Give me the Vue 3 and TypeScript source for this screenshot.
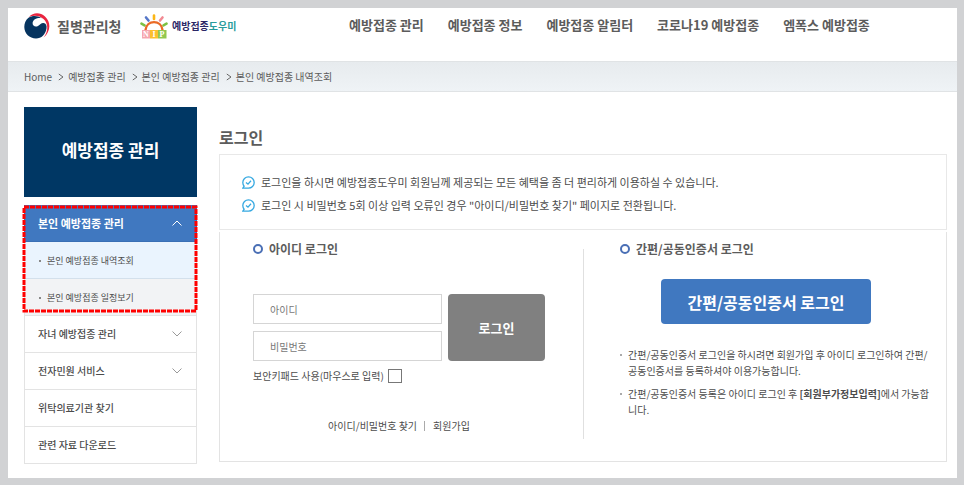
<script setup lang="ts">
import { ref } from 'vue'

interface MenuItem {
  label: string
  expandable: boolean
}

const navItems: string[] = ['예방접종 관리', '예방접종 정보', '예방접종 알림터', '코로나19 예방접종', '엠폭스 예방접종']
const crumbs: string[] = ['Home', '예방접종 관리', '본인 예방접종 관리', '본인 예방접종 내역조회']
const subItems: string[] = ['본인 예방접종 내역조회', '본인 예방접종 일정보기']
const menuItems: MenuItem[] = [
  { label: '자녀 예방접종 관리', expandable: true },
  { label: '전자민원 서비스', expandable: true },
  { label: '위탁의료기관 찾기', expandable: false },
  { label: '관련 자료 다운로드', expandable: false },
]
const notices: string[] = [
  '로그인을 하시면 예방접종도우미 회원님께 제공되는 모든 혜택을 좀 더 편리하게 이용하실 수 있습니다.',
  '로그인 시 비밀번호 5회 이상 입력 오류인 경우 "아이디/비밀번호 찾기" 페이지로 전환됩니다.',
]

const userId = ref('')
const password = ref('')
const keypad = ref(false)
</script>

<template>
  <div class="frame">
    <div class="page">
      <header class="header">
        <a class="agency" href="#">
          <svg class="emblem" viewBox="0 0 26 26" aria-hidden="true">
            <path fill="#e9243f" d="M5 4C9-.6 16-1 21 3.500C27.500 9.500 26.500 19 19.500 24.500C24.500 18.500 24.500 10.500 19.500 6C15.500 2.400 10 1.600 5 4Z" />
            <path fill="#06345f" d="M4.500 4.800C8 2.500 13.500 2.400 17.500 5.200C13.500 4.400 8.800 6.500 8.600 10C8.400 13 11.500 14.600 14 12.900C16.200 11.400 17.200 9.700 19.500 9.900C22 10.200 23 12.600 22.500 15.500C21.500 21.500 17.500 25.500 12 25.500C5.500 25.500.3 20.500.3 14C.3 10.300 1.800 6.900 4.500 4.800Z" />
          </svg>
          <span>질병관리청</span>
        </a>
        <a class="service" href="#">
          <svg class="sun" viewBox="0 0 28 25" aria-hidden="true">
            <g fill="none" stroke-linecap="round" stroke-width="2.600">
              <path stroke="#7cc142" d="M1.500 9.700L4.500 11.300" />
              <path stroke="#5677c8" d="M6 3.500L8.500 6.500" />
              <path stroke="#fbb615" d="M14 1.500V5" />
              <path stroke="#f28a93" d="M22.500 3.500L20 6.500" />
              <path stroke="#7cc142" d="M26.500 9.700L23.500 11.300" />
            </g>
            <path fill="none" stroke="#ea6a25" stroke-width="2.400" d="M5.500 16C6.500 5.500 21.500 5.500 22.500 16" />
            <path fill="#f6a5ae" d="M2 16h8v8.500H2z" />
            <path fill="#fbc02d" d="M10 16h8v8.500h-8z" />
            <path fill="#91c84f" d="M18 16h8.500v8.500H18z" />
            <g class="sun-letters" fill="#fff" text-anchor="middle">
              <text x="6" y="23">N</text>
              <text x="14" y="23">I</text>
              <text x="22" y="23">P</text>
            </g>
          </svg>
          <span>예방접종<em>도우미</em></span>
        </a>
        <nav class="nav">
          <a v-for="item in navItems" :key="item" href="#">{{ item }}</a>
        </nav>
      </header>

      <nav class="crumbs">
        <template v-for="(crumb, i) in crumbs" :key="crumb">
          <svg v-if="i > 0" class="crumb-arrow" viewBox="0 0 6 8" aria-hidden="true"><path d="M.8 1L5 4L.8 7" /></svg>
          <a href="#">{{ crumb }}</a>
        </template>
      </nav>

      <div class="body">
        <aside class="side">
          <h2>예방접종 관리</h2>
          <div class="menu">
            <div class="open-group">
              <a class="row active" href="#">
                <span>본인 예방접종 관리</span>
                <svg class="chevron" viewBox="0 0 10 6" aria-hidden="true"><path d="M.5 5.500L5 1L9.500 5.500" /></svg>
              </a>
              <a v-for="item in subItems" :key="item" class="sub" href="#">{{ item }}</a>
              <svg class="highlight" aria-hidden="true"><rect width="100%" height="100%" /></svg>
            </div>
            <a v-for="item in menuItems" :key="item.label" class="row" href="#">
              <span>{{ item.label }}</span>
              <svg v-if="item.expandable" class="chevron" viewBox="0 0 10 6" aria-hidden="true"><path d="M.5.5L5 5L9.500.5" /></svg>
            </a>
          </div>
        </aside>

        <main class="main">
          <h1>로그인</h1>
          <ul class="notice">
            <li v-for="notice in notices" :key="notice">
              <svg class="check" viewBox="0 0 13 13" aria-hidden="true">
                <path d="M.8 12.200H6.500A5.700 5.700 0 1 0 .8 6.500C.8 8 1.300 9.200 2.100 10.200Z" />
                <path d="M4 6.400L6 8.200L9 4.800" />
              </svg>
              <span>{{ notice }}</span>
            </li>
          </ul>

          <div class="panels">
            <section class="panel">
              <h3>아이디 로그인</h3>
              <form class="login" @submit.prevent>
                <div class="fields">
                  <input v-model="userId" type="text" placeholder="아이디" aria-label="아이디" />
                  <input v-model="password" type="password" placeholder="비밀번호" aria-label="비밀번호" />
                </div>
                <button class="submit" type="submit">로그인</button>
              </form>
              <div class="keypad">
                <label for="keypad">보안키패드 사용(마우스로 입력)</label>
                <input id="keypad" v-model="keypad" type="checkbox" />
              </div>
              <div class="links">
                <a href="#">아이디/비밀번호 찾기</a>
                <a href="#">회원가입</a>
              </div>
            </section>

            <section class="panel cert">
              <h3>간편/공동인증서 로그인</h3>
              <button class="cert-button" type="button">간편/공동인증서 로그인</button>
              <ul class="tips">
                <li>간편/공동인증서 로그인을 하시려면 회원가입 후 아이디 로그인하여 간편/<wbr />공동인증서를 등록하셔야 이용가능합니다.</li>
                <li>간편/공동인증서 등록은 아이디 로그인 후 <b>[회원부가정보입력]</b>에서 가능합니다.</li>
              </ul>
            </section>
          </div>
        </main>
      </div>
    </div>
  </div>
</template>

<style>
body {
  background: #fff;
}
</style>

<style scoped>
*,
*::before {
  box-sizing: border-box;
}
.frame {
  padding: 8px 7px 7px 8px;
  background: #d1d2d4;
  color: #4c4c4c;
  font-family: "Noto Sans CJK KR", "Noto Sans", sans-serif;
  font-size: 10px;
  line-height: 16px;
}
.page {
  background: #fff;
}
a {
  color: inherit;
  text-decoration: none;
}
h1,
h2,
h3,
ul {
  margin: 0;
  padding: 0;
  list-style: none;
}
button,
input {
  font-family: inherit;
}
.header {
  display: flex;
  align-items: flex-start;
  height: 53px;
  padding: 5px 16px 0;
}
.agency,
.service {
  display: flex;
  align-items: center;
  height: 26px;
}
.agency {
  gap: 7px;
  width: 116px;
  color: #5c5c5c;
  font-size: 14px;
  font-weight: 700;
}
.emblem {
  width: 26px;
  height: 26px;
}
.service {
  gap: 4px;
  width: 209px;
  color: #2b2766;
  font-size: 10px;
  font-weight: 700;
}
.service em {
  color: #2a9c9c;
  font-style: normal;
}
.sun {
  width: 28px;
  height: 25px;
}
.sun-letters {
  font-family: "Liberation Serif", serif;
  font-size: 8px;
  font-weight: 700;
}
.nav {
  display: flex;
  gap: 24px;
  color: #5c5c5c;
  font-size: 13px;
  font-weight: 700;
  line-height: 24px;
  white-space: nowrap;
}
.crumbs {
  display: flex;
  align-items: center;
  gap: 4px;
  height: 31px;
  padding: 0 16px;
  border-top: 1px solid #e0e3e5;
  border-bottom: 1px solid #e0e3e5;
  background: linear-gradient(#e7ebee, #eff3f6);
  color: #5c5c5c;
}
.crumb-arrow {
  width: 6px;
  height: 8px;
  margin-left: 2px;
  fill: none;
  stroke: #666;
}
.body {
  display: flex;
  gap: 22px;
  padding: 15px 10px 14px 16px;
}
.side {
  flex: 0 0 173px;
}
.side h2 {
  display: flex;
  align-items: center;
  justify-content: center;
  height: 90px;
  margin-bottom: 8px;
  padding-bottom: 4px;
  background: #003764;
  color: #fff;
  font-size: 17px;
  font-weight: 700;
}
.open-group {
  position: relative;
}
.row,
.sub {
  display: flex;
  align-items: center;
  height: 37px;
  border: 1px solid #e3e3e3;
  border-top: 0;
}
.row {
  justify-content: space-between;
  padding: 0 14px 0 13px;
  font-weight: 500;
}
.row.active {
  border-color: #3a6fb5;
  background: #4078c0;
  color: #fff;
  font-size: 11px;
  font-weight: 700;
}
.sub {
  gap: 6px;
  padding: 2px 0 0 14px;
  background: #f2f3f5;
  font-size: 9px;
}
.active + .sub {
  border-bottom-color: #d3e0ec;
  background: #eaf4fe;
}
.sub::before {
  width: 2px;
  height: 2px;
  background: #888;
  content: "";
}
.chevron {
  width: 10px;
  height: 6px;
  fill: none;
  stroke: #999;
}
.active .chevron {
  stroke: #fff;
}
.highlight {
  position: absolute;
  top: 2px;
  left: 0;
  width: calc(100% - 1px);
  height: calc(100% - 7px);
  overflow: visible;
  fill: none;
  stroke: #f00;
  stroke-dasharray: 5 1;
  stroke-width: 3px;
}
.main {
  flex: 1;
  min-width: 0;
}
h1 {
  margin: 18px 0 5px;
  color: #5c5c5c;
  font-size: 16px;
  font-weight: 700;
  line-height: 24px;
}
.notice {
  padding: 16px 22px 12px;
  border: 1px solid #e8e8e8;
  font-size: 11px;
  line-height: 23px;
}
.notice li {
  display: flex;
  align-items: center;
  gap: 6px;
}
.check {
  width: 13px;
  height: 13px;
  fill: none;
  stroke: #36a9e1;
  stroke-width: 1.3px;
}
.panels {
  display: grid;
  grid-template-columns: 1fr 1fr;
  margin-top: 2px;
  padding: 17px 0 22px;
  border: 1px solid #e3e3e3;
  border-top: 0;
}
.panel {
  height: 190px;
  padding: 0 38px 0 33px;
}
.cert {
  padding: 0 12px 0 36px;
  border-left: 1px solid #e0e0e0;
}
h3 {
  display: flex;
  align-items: center;
  gap: 6px;
  height: 16px;
  margin-top: -8px;
  color: #5c5c5c;
  font-size: 12px;
  font-weight: 700;
}
h3::before {
  width: 10px;
  height: 10px;
  border: 2px solid #4a6fb5;
  border-radius: 50%;
  content: "";
}
.login {
  display: flex;
  gap: 6px;
  height: 67px;
  margin-top: 37px;
}
.fields {
  display: flex;
  flex: 1;
  flex-direction: column;
  justify-content: space-between;
  min-width: 0;
}
.fields input {
  width: 100%;
  height: 30px;
  padding: 0 16px;
  border: 1px solid #d5d5d5;
  border-radius: 0;
  color: #4c4c4c;
  font-size: 10px;
}
.fields input::placeholder {
  color: #777;
}
.submit,
.cert-button {
  padding: 0;
  border: 0;
  border-radius: 4px;
  color: #fff;
  font-weight: 700;
}
.submit {
  flex: 0 0 97px;
  background: #808080;
  font-size: 13px;
}
.keypad {
  display: flex;
  align-items: center;
  gap: 4px;
  height: 16px;
  margin-top: 7px;
}
.keypad input {
  width: 14px;
  height: 14px;
  margin: 0;
  border: 1px solid #777;
  background: #fff;
  appearance: none;
}
.keypad input:checked {
  background: #4078c0;
}
.links {
  display: flex;
  justify-content: center;
  margin-top: 34px;
  line-height: 16px;
}
.links a + a {
  display: flex;
  align-items: center;
  gap: 8px;
  margin-left: 7px;
}
.links a + a::before {
  width: 1px;
  height: 10px;
  background: #aaa;
  content: "";
}
.cert-button {
  display: block;
  width: 210px;
  height: 45px;
  margin: 22px 0 0 41px;
  background: #4078c0;
  font-size: 16px;
}
.tips {
  display: grid;
  gap: 7px;
  margin-top: 23px;
}
.tips li {
  position: relative;
  padding-left: 8px;
}
.tips li::before {
  position: absolute;
  top: 7px;
  left: 0;
  width: 2px;
  height: 2px;
  background: #aaa;
  content: "";
}
</style>
